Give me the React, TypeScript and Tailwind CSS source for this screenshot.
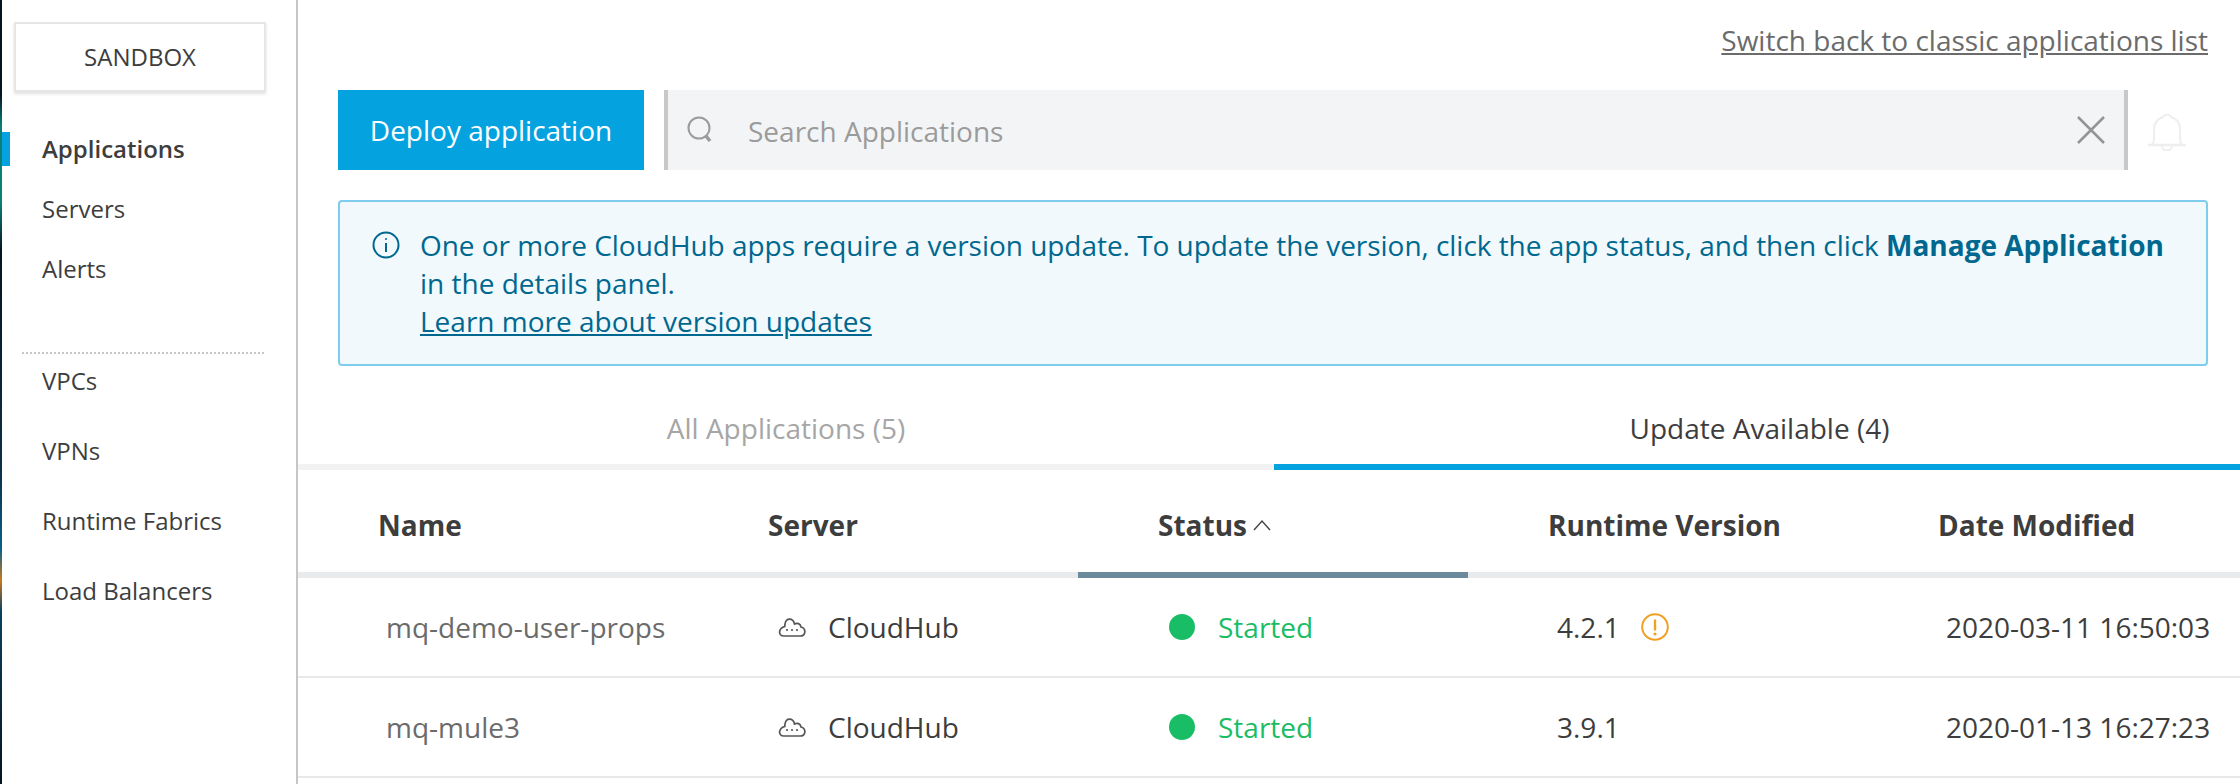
const navTop = ['Servers', 'Alerts']
const navBottom = ['VPCs', 'VPNs', 'Runtime Fabrics', 'Load Balancers']

const rows = [
  { name: 'mq-demo-user-props', version: '4.2.1', warn: true, date: '2020-03-11 16:50:03' },
  { name: 'mq-mule3', version: '3.9.1', warn: false, date: '2020-01-13 16:27:23' },
]

function SearchIcon() {
  return (
    <svg width="26" height="28" viewBox="0 0 26 28" fill="none" stroke="#9b9b9b">
      <circle cx="12" cy="12" r="10.5" strokeWidth="2" />
      <path d="M19 20l4 5" strokeWidth="3.5" />
    </svg>
  )
}

function CloseIcon() {
  return (
    <svg width="30" height="30" viewBox="0 0 30 30" fill="none" stroke="#949494" strokeWidth="2.5">
      <path d="M2 2l26 26M28 2L2 28" />
    </svg>
  )
}

function BellIcon() {
  return (
    <svg width="40" height="38" viewBox="0 0 40 38" fill="none" stroke="#eeeeee" strokeWidth="2">
      <path d="M1 32h38" strokeWidth="2.5" />
      <path d="M5 32c2-2 2-4 2-8v-8C7 9 12 5 16 4c1-3 7-3 8 0 4 1 9 5 9 12v8c0 4 0 6 2 8" />
      <path d="M15 33c0 6 10 6 10 0" />
    </svg>
  )
}

function InfoIcon() {
  return (
    <svg width="28" height="28" viewBox="0 0 28 28" fill="none" stroke="#00688f" strokeWidth="2">
      <circle cx="14" cy="14" r="12.5" />
      <path d="M14 12v9" />
      <circle cx="14" cy="8" r="1" fill="#00688f" stroke="none" />
    </svg>
  )
}

function CloudIcon() {
  return (
    <svg width="28" height="20" viewBox="0 0 28 20" fill="none" stroke="#555555" strokeWidth="1.7">
      <path d="M6 19h16c6 0 6.500-7.500 1-9-.5-3.500-4-4.500-6.500-3C15 .5 8 .5 7 7c-.2.8-.2 1.500-.2 2.500C.5 11-.5 19 6 19z" />
      <circle cx="9" cy="13" r="1.100" fill="#555555" stroke="none" />
      <circle cx="14" cy="13" r="1.100" fill="#555555" stroke="none" />
      <circle cx="19" cy="13" r="1.100" fill="#555555" stroke="none" />
    </svg>
  )
}

function WarnIcon() {
  return (
    <svg width="28" height="28" viewBox="0 0 28 28" fill="none" stroke="#f0a124" strokeWidth="2">
      <circle cx="14" cy="14" r="12.8" />
      <path d="M14 6.500l0 11" strokeWidth="2.400" />
      <circle cx="14" cy="21" r="1.600" fill="#f0a124" stroke="none" />
    </svg>
  )
}

function SortIcon() {
  return (
    <svg width="20" height="12" viewBox="0 0 20 12" fill="none" stroke="#444444" strokeWidth="1.400">
      <path d="M2 11l8-9 8 9" />
    </svg>
  )
}

function Sidebar() {
  return (
    <aside className="w-[296px] shrink-0 border-r-2 border-[#c6c6c6] bg-white pt-[22px] text-[24px] text-[#3d3d3d]">
      <div className="ml-[12px] flex h-[70px] w-[252px] items-center justify-center border-2 border-[#e6e6e6] shadow-[0_2px_3px_rgba(0,0,0,0.12)]">
        SANDBOX
      </div>
      <div className="relative mt-[27px] flex h-[60px] items-center pl-[40px] font-semibold">
        <span className="absolute left-0 top-[13px] h-[34px] w-[8px] bg-[#04a3e0]" />
        Applications
      </div>
      {navTop.map((item) => (
        <div key={item} className="flex h-[60px] items-center pl-[40px]">
          {item}
        </div>
      ))}
      <div className="ml-[20px] mr-[32px] mt-[53px] border-t-2 border-dotted border-[#c6c6c6]" />
      <div className="flex flex-col gap-[32px] pl-[40px] pt-[8px] leading-[38px]">
        {navBottom.map((item) => (
          <div key={item}>{item}</div>
        ))}
      </div>
    </aside>
  )
}

function Toolbar() {
  return (
    <div className="flex px-[40px]">
      <button className="h-[80px] w-[306px] bg-[#04a3e0] text-[28px] text-white">Deploy application</button>
      <div className="ml-[20px] flex h-[80px] w-[1464px] items-center border-x-4 border-[#c8c8c8] bg-[#f3f4f6] pl-[19px] pr-[18px]">
        <SearchIcon />
        <span className="ml-[35px] flex-1 pt-[2px] text-[28px] text-[#9b9b9b]">Search Applications</span>
        <CloseIcon />
      </div>
      <div className="ml-[19px] flex h-[80px] items-center pt-[4px]">
        <BellIcon />
      </div>
    </div>
  )
}

function Alert() {
  return (
    <div className="mx-[40px] mt-[30px] flex h-[166px] w-[1870px] rounded-[4px] border-2 border-[#7fcdec] bg-[#f1f9fd] pl-[32px] pr-[30px] pt-[30px] text-[28px] leading-[38px] text-[#00688f]">
      <div className="mt-[-1px] w-[48px] shrink-0">
        <InfoIcon />
      </div>
      <div className="mt-[-6px]">
        <span className="tracking-[-0.04px]">
          One or more CloudHub apps require a version update. To update the version, click the app status, and then
          click
        </span>{' '}
        <b>Manage Application</b> in the details panel.
        <br />
        <span className="underline">Learn more about version updates</span>
      </div>
    </div>
  )
}

function Tabs() {
  return (
    <div className="mt-[40px] flex text-[28px]">
      <div className="flex h-[64px] w-[976px] justify-center border-b-[6px] border-[#f2f2f2] pt-[1px] text-[#a6a6a6]">
        All Applications (5)
      </div>
      <div className="flex h-[64px] flex-1 justify-center border-b-[6px] border-[#04a3e0] pl-[5px] pt-[1px] text-[#3d3d3d]">
        Update Available (4)
      </div>
    </div>
  )
}

function Table() {
  return (
    <div className="text-[28px]">
      <div className="grid h-[108px] grid-cols-[390px_390px_390px_390px_1fr] border-b-[6px] border-[#e8eaec] pt-[8px] font-bold text-[#3d3d3d]">
        <div className="flex items-center pl-[80px]">Name</div>
        <div className="flex items-center pl-[80px]">Server</div>
        <div className="relative flex items-center gap-[5px] pl-[80px]">
          Status <SortIcon />
          <span className="absolute inset-x-0 bottom-[-6px] h-[6px] bg-[#6b8a9c]" />
        </div>
        <div className="flex items-center pl-[80px]">Runtime Version</div>
        <div className="flex items-center pl-[80px]">Date Modified</div>
      </div>
      {rows.map((row) => (
        <div
          key={row.name}
          className="grid h-[100px] grid-cols-[390px_390px_390px_390px_1fr] border-b-2 border-[#e8e8e8] text-[#3d3d3d]"
        >
          <div className="flex items-center pl-[88px] text-[#6b6b6b]">{row.name}</div>
          <div className="flex items-center pl-[90px]">
            <CloudIcon />
            <span className="ml-[22px]">CloudHub</span>
          </div>
          <div className="flex items-center pl-[91px] text-[#19bd66]">
            <span className="h-[26px] w-[26px] rounded-full bg-[#19bd66]" />
            <span className="ml-[23px]">Started</span>
          </div>
          <div className="flex items-center pl-[89px]">
            {row.version}
            {row.warn && (
              <span className="ml-[21px] flex">
                <WarnIcon />
              </span>
            )}
          </div>
          <div className="flex items-center pl-[88px]">{row.date}</div>
        </div>
      ))}
    </div>
  )
}

export default function App() {
  return (
    <div className="flex h-[784px] w-[2240px] overflow-hidden bg-white font-['Open_Sans',sans-serif]">
      <div className="w-[2px] shrink-0 bg-[linear-gradient(180deg,#06141f_0%,#06141f_12%,#0a7f78_16%,#0a7f78_26%,#06141f_32%,#0b2f4a_60%,#0a5f88_70%,#c77a1f_74%,#0a3f60_78%,#06141f_100%)]" />
      <Sidebar />
      <main className="min-w-0 flex-1">
        <div className="flex h-[90px] justify-end px-[32px] pt-[20px]">
          <span className="text-[28px] leading-[40px] text-[#6b6b6b] underline">
            Switch back to classic applications list
          </span>
        </div>
        <Toolbar />
        <Alert />
        <Tabs />
        <Table />
      </main>
    </div>
  )
}
